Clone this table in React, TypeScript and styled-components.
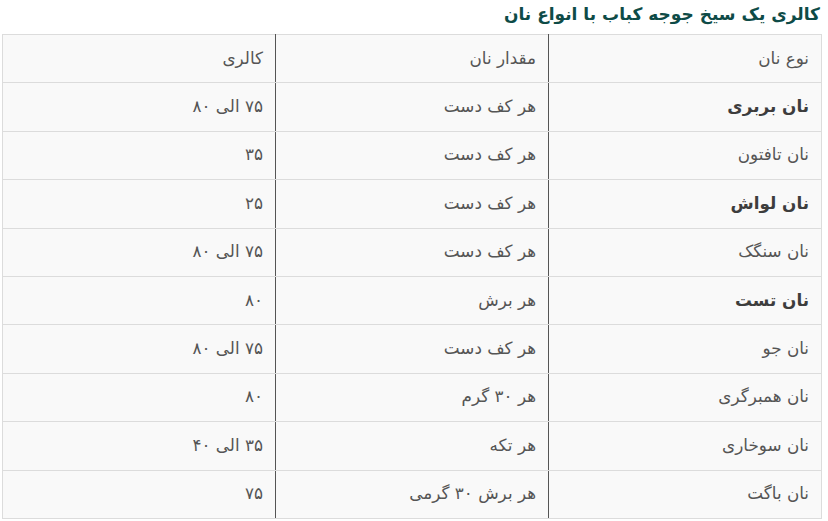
import React from "react";
import styled, { createGlobalStyle } from "styled-components";

const GlobalStyle = createGlobalStyle`
  html, body {
    margin: 0;
    padding: 0;
    background: #ffffff;
  }
  body {
    font-family: "DejaVu Sans", "Noto Sans", sans-serif;
  }
`;

const Wrapper = styled.div`
  direction: rtl;
  width: 820px;
  padding: 0 6px 0 2px;
`;

const Title = styled.h3`
  margin: 0;
  height: 34px;
  line-height: 28px;
  padding-right: 2px;
  font-size: 17px;
  font-weight: bold;
  color: #0e4b47;
`;

const Table = styled.table`
  width: 100%;
  border-collapse: collapse;
  background: #f9f9f9;
  border: 1px solid #dcdcdc;
  table-layout: fixed;
`;

const Row = styled.tr`
  height: 48.4px;
`;

const Cell = styled.td<{ $bold?: boolean; $last?: boolean }>`
  padding: 0 12px 2px;
  line-height: 20px;
  text-align: right;
  font-size: 16.8px;
  color: ${(p) => (p.$bold ? "#3d3d3d" : "#555555")};
  font-weight: ${(p) => (p.$bold ? "bold" : "normal")};
  border-bottom: 1px solid #dcdcdc;
  border-left: ${(p) => (p.$last ? "none" : "1px solid #555555")};
`;

const rows = [
  { name: "نان بربری", amount: "هر کف دست", cal: "۷۵ الی ۸۰", bold: true },
  { name: "نان تافتون", amount: "هر کف دست", cal: "۳۵" },
  { name: "نان لواش", amount: "هر کف دست", cal: "۲۵", bold: true },
  { name: "نان سنگک", amount: "هر کف دست", cal: "۷۵ الی ۸۰" },
  { name: "نان تست", amount: "هر برش", cal: "۸۰", bold: true },
  { name: "نان جو", amount: "هر کف دست", cal: "۷۵ الی ۸۰" },
  { name: "نان همبرگری", amount: "هر ۳۰ گرم", cal: "۸۰" },
  { name: "نان سوخاری", amount: "هر تکه", cal: "۳۵ الی ۴۰" },
  { name: "نان باگت", amount: "هر برش ۳۰ گرمی", cal: "۷۵" },
];

const App = () => {
  return (
    <>
      <GlobalStyle />
      <Wrapper>
        <Title>کالری یک سیخ جوجه کباب با انواع نان</Title>
        <Table>
          <tbody>
            <Row>
              <Cell>نوع نان</Cell>
              <Cell>مقدار نان</Cell>
              <Cell $last>کالری</Cell>
            </Row>
            {rows.map((r) => (
              <Row key={r.name}>
                <Cell $bold={r.bold}>{r.name}</Cell>
                <Cell>{r.amount}</Cell>
                <Cell $last>{r.cal}</Cell>
              </Row>
            ))}
          </tbody>
        </Table>
      </Wrapper>
    </>
  );
};

export default App;
